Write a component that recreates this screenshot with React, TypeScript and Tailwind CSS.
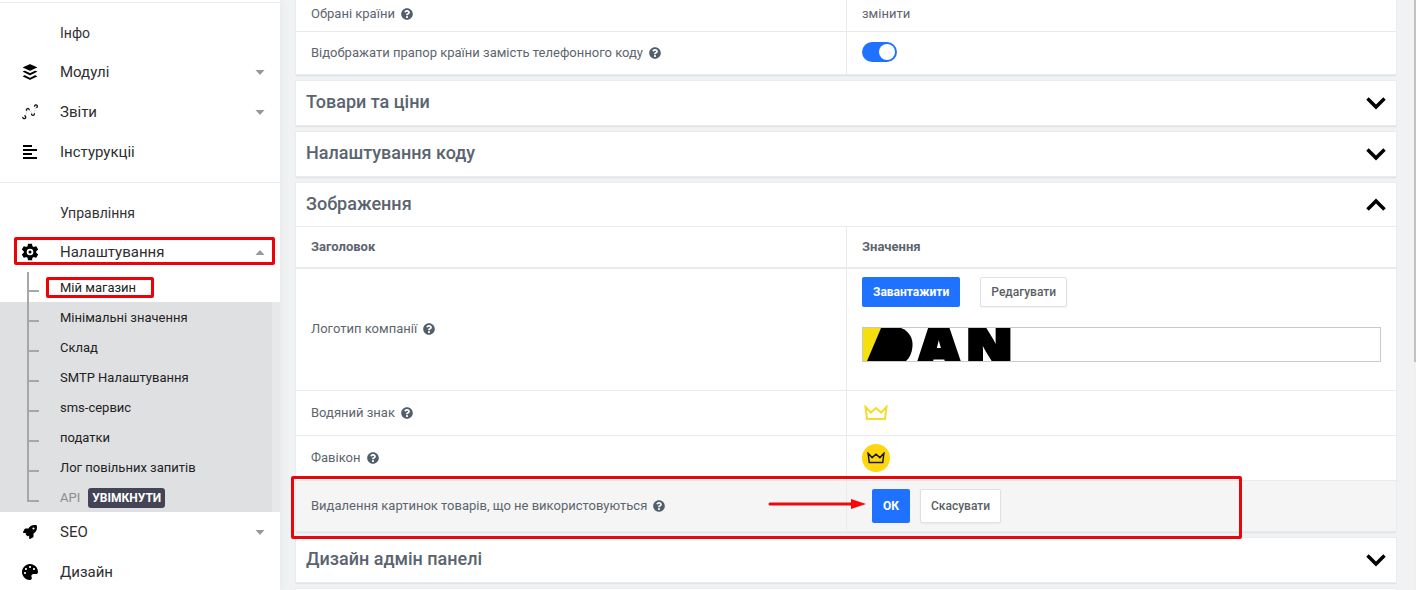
import React, { useState } from 'react'
import { FaBuffer, FaPalette, FaQuestionCircle, FaRocket } from 'react-icons/fa'
import clsx from 'clsx'

const GraphIcon = () => (
  <svg viewBox="0 0 16 16" className="h-4 w-4" fill="none" stroke="#111">
    <path d="M3 12.5L5.500 6M6.800 6L10.500 9.500M11.800 9.500L14 3" stroke="#ddd" />
    <path d="M.8 12.8a1.5 1.5 0 1 0 1.6-1.1M4.6 6.6a1.4 1.4 0 1 1 2.6-.5M9.6 9.6a1.4 1.4 0 1 0 2.6-.2M12.6 2.8a1.4 1.4 0 1 1 1.6.9" strokeWidth="1.3" />
  </svg>
)

const LinesIcon = () => (
  <svg viewBox="0 0 16 16" className="h-4 w-4">
    <path d="M1 1h9v2H1zM1 5h14v2H1zM1 9h9v2H1zM1 13h14v2H1z" />
  </svg>
)

const GearIcon = () => (
  <svg viewBox="0 0 24 24" className="h-5 w-5">
    <path d="M19.43 12.98c.04-.32.07-.64.07-.98s-.03-.66-.07-.98l2.11-1.65a.5.5 0 0 0 .12-.64l-2-3.46a.5.5 0 0 0-.61-.22l-2.49 1a7.3 7.3 0 0 0-1.69-.98l-.38-2.65A.49.49 0 0 0 14 2h-4a.49.49 0 0 0-.49.42l-.38 2.65c-.61.25-1.17.59-1.69.98l-2.49-1a.5.5 0 0 0-.61.22l-2 3.46a.5.5 0 0 0 .12.64l2.11 1.65c-.04.32-.07.65-.07.98s.03.66.07.98l-2.11 1.65a.5.5 0 0 0-.12.64l2 3.46c.12.22.39.3.61.22l2.49-1c.52.4 1.08.73 1.69.98l.38 2.65c.03.24.24.42.49.42h4c.25 0 .46-.18.49-.42l.38-2.65c.61-.25 1.17-.59 1.69-.98l2.49 1c.23.09.49 0 .61-.22l2-3.46a.5.5 0 0 0-.12-.64z" />
    <circle cx="12" cy="12" r="4" fill="#fff" />
    <circle cx="12" cy="12" r="1.8" />
  </svg>
)

const Caret = ({ up = false }: { up?: boolean }) => (
  <svg viewBox="0 0 10 5" className={clsx('h-[5px] w-2.5', up && 'rotate-180')} fill="#999">
    <path d="M.5 0h9L5 5z" />
  </svg>
)

const Chevron = ({ up = false }: { up?: boolean }) => (
  <svg
    viewBox="0 0 20 14"
    className={clsx('h-3.5 w-5', up && 'rotate-180')}
    fill="none"
    stroke="#000"
    strokeWidth="3.5"
  >
    <path d="M1.500 2.500L10 11l8.500-8.500" />
  </svg>
)

const Crown = ({ className }: { className: string }) => (
  <svg viewBox="0 0 24 16" className={className} fill="none" stroke="currentColor" strokeWidth="2">
    <path d="M1.5 1.8L3 14h18l1.5-12.2-5.3 5.7L12 3 6.8 7.5z" />
  </svg>
)

const CompanyLogo = () => (
  <svg viewBox="0 0 150 33" className="h-[33px] w-[150px]" role="img" aria-label="DAN">
    <path d="M0 0h18L4 33H0z" fill="#f5df0d" />
    <path d="M18 0h20c8 3 12 10 11.500 18-.5 7-3 12-6.500 15H4z" />
    <g className="font-['Inter','Roboto',sans-serif] font-black">
      <text x="17" y="28" fontSize="32">
        D
      </text>
      <g fontSize="58" stroke="#000" strokeWidth="3">
        <text x="53" y="38">
          A
        </text>
        <text x="104" y="38">
          N
        </text>
      </g>
    </g>
  </svg>
)

type NavItemProps = {
  label: string
  icon: React.ReactNode
  arrow?: 'up' | 'down'
  marked?: boolean
}

const NavItem = ({ label, icon, arrow, marked }: NavItemProps) => (
  <li className="relative">
    <a href="#" className="flex h-10 items-center pr-[15px] text-[15px] text-[#2e2e2e]">
      <span className="flex w-[60px] justify-center text-base text-black">{icon}</span>
      <span className="flex-1">{label}</span>
      {arrow && <Caret up={arrow === 'up'} />}
    </a>
    {marked && (
      <span className="pointer-events-none absolute top-[5px] right-[5px] left-3.5 h-7 rounded-xs border-3 border-[#ee0207]" />
    )}
  </li>
)

const NavTitle = ({ children }: { children: React.ReactNode }) => (
  <h2 className="flex h-10 items-center pt-0.5 pl-[60px] text-sm text-[#333]">{children}</h2>
)

const subItems = [
  'Мій магазин',
  'Мінімальні значення',
  'Склад',
  'SMTP Налаштування',
  'sms-сервис',
  'податки',
  'Лог повільних запитів',
  'API',
]

const SubMenu = () => (
  <ul className="text-[13px] text-[#222]">
    {subItems.map((item, i) => {
      const last = i === subItems.length - 1
      return (
        <li
          key={item}
          className={clsx(
            'relative flex h-[30px] items-center pl-[27px]',
            i === 0 ? 'bg-white' : 'border-r-8 border-[#e7e8ea] bg-[#dfe0e2]'
          )}
        >
          <span className="mr-[21px] flex w-3 flex-col self-stretch">
            <span className="h-5 border-b-2 border-l-2 border-[#a6a7a9]" />
            {!last && <span className="flex-1 border-l-2 border-[#a6a7a9]" />}
          </span>
          <a href="#" className={clsx('pt-0.5', last && 'text-[#8b8c8e]')}>
            {item}
          </a>
          {last && (
            <button
              type="button"
              className="mt-0.5 ml-2 h-5 rounded-[3px] bg-[#434556] px-1 text-xs font-bold text-white"
            >
              УВІМКНУТИ
            </button>
          )}
          {i === 0 && (
            <span className="pointer-events-none absolute top-[5px] left-[46px] h-[21px] w-[108px] rounded-xs border-3 border-[#ee0207]" />
          )}
        </li>
      )
    })}
  </ul>
)

const Sidebar = () => (
  <aside className="z-10 w-[280px] shrink-0 bg-white pt-0.5 shadow-[0_0_10px_rgba(0,0,0,0.06)]">
    <nav>
      <div className="border-t border-[#e9eaeb] pt-[9px] pb-2.5">
        <NavTitle>Інфо</NavTitle>
        <ul>
          <NavItem label="Модулі" icon={<FaBuffer className="h-[18px] w-[18px]" />} arrow="down" />
          <NavItem label="Звіти" icon={<GraphIcon />} arrow="down" />
          <NavItem label="Інстурукціі" icon={<LinesIcon />} />
        </ul>
      </div>
      <div className="border-t border-[#e9eaeb] pt-[9px]">
        <NavTitle>Управління</NavTitle>
        <ul>
          <NavItem label="Налаштування" icon={<GearIcon />} arrow="up" marked />
          <li>
            <SubMenu />
          </li>
          <NavItem label="SEO" icon={<FaRocket className="h-3.5 w-3.5" />} arrow="down" />
          <NavItem label="Дизайн" icon={<FaPalette />} />
        </ul>
      </div>
    </nav>
  </aside>
)

const Hint = ({ id, children }: { id?: string; children: string }) => (
  <span className="flex items-center gap-1.5">
    {id ? <label htmlFor={id}>{children}</label> : children}
    <FaQuestionCircle className="h-3 w-3 text-[#525f6b]" />
  </span>
)

const Card = ({ children }: { children?: React.ReactNode }) => (
  <section className="bg-white shadow-[0_0_0_1px_#e9ebed,0_2px_1px_#e1e4e6]">{children}</section>
)

const CardHeader = ({ title, open = false }: { title: string; open?: boolean }) => (
  <h2 className="text-lg font-medium text-[#5a646e]">
    <button
      type="button"
      aria-expanded={open}
      className={clsx(
        'flex w-full items-center justify-between px-2.5 text-left',
        open ? 'h-[43px]' : 'h-11'
      )}
    >
      <span className="pb-0.5">{title}</span>
      <Chevron up={open} />
    </button>
  </h2>
)

const labelCell = 'border-t border-[#e8eaec] px-[15px]'
const valueCell = 'border-t border-l border-[#e8eaec] px-[15px]'
const primaryBtn = 'rounded-xs bg-[#1f72ff] px-[11px] font-bold text-white'
const plainBtn =
  'rounded-xs border border-[#dde1e4] bg-white px-2.5 font-medium text-[#5a5f66] shadow-xs'

const App = () => {
  const [flag, setFlag] = useState(true)

  return (
    <div className="flex h-screen overflow-hidden bg-[#f0f2f4] font-['Roboto','Liberation_Sans',sans-serif] text-[13px] text-[#5c656e]">
      <Sidebar />
      <main className="flex min-w-0 flex-1 flex-col gap-[7px] pr-[18px] pl-4">
        <Card>
          <table className="w-full table-fixed border-separate border-spacing-0">
            <tbody>
              <tr className="h-[31px]">
                <td className="px-[15px] pb-1">
                  <Hint>Обрані країни</Hint>
                </td>
                <td className="border-l border-[#e8eaec] px-[15px] pb-1">
                  <a href="#">змінити</a>
                </td>
              </tr>
              <tr className="h-[43px]">
                <td className={labelCell}>
                  <Hint id="flag">Відображати прапор країни замість телефонного коду</Hint>
                </td>
                <td className={clsx(valueCell, 'pb-0.5')}>
                  <input
                    id="flag"
                    type="checkbox"
                    role="switch"
                    checked={flag}
                    onChange={(e) => setFlag(e.target.checked)}
                    className="flex h-5 w-[35px] appearance-none items-center rounded-full bg-[#b5bac0] px-0.5 before:h-4 before:w-4 before:rounded-full before:bg-white checked:justify-end checked:bg-[#1f72ff]"
                  />
                </td>
              </tr>
            </tbody>
          </table>
        </Card>

        <Card>
          <CardHeader title="Товари та ціни" />
        </Card>
        <Card>
          <CardHeader title="Налаштування коду" />
        </Card>

        <Card>
          <CardHeader title="Зображення" open />
          <table className="w-full table-fixed border-separate border-spacing-0">
            <thead>
              <tr className="h-[41px] text-left">
                <th className={clsx(labelCell, 'font-bold')}>Заголовок</th>
                <th className={clsx(valueCell, 'font-bold')}>Значення</th>
              </tr>
            </thead>
            <tbody>
              <tr className="h-[123px]">
                <td className={clsx(labelCell, 'border-t-2 pb-0.5')}>
                  <Hint>Логотип компанії</Hint>
                </td>
                <td className={clsx(valueCell, 'border-t-2 pt-2 pb-7')}>
                  <div className="flex gap-5 text-xs">
                    <button type="button" className={clsx(primaryBtn, 'h-[30px]')}>
                      Завантажити
                    </button>
                    <button type="button" className={clsx(plainBtn, 'h-[30px]')}>
                      Редагувати
                    </button>
                  </div>
                  <div className="mt-5 border border-[#c8c9ca]">
                    <CompanyLogo />
                  </div>
                </td>
              </tr>
              <tr className="h-[45px]">
                <td className={labelCell}>
                  <Hint>Водяний знак</Hint>
                </td>
                <td className={valueCell}>
                  <span className="flex w-7 justify-center text-[#f3dc2c]">
                    <Crown className="h-4 w-6" />
                  </span>
                </td>
              </tr>
              <tr className="h-[45px]">
                <td className={labelCell}>
                  <Hint>Фавікон</Hint>
                </td>
                <td className={valueCell}>
                  <span className="flex h-7 w-7 items-center justify-center rounded-full bg-[#ffd60f] text-[#1c1a10]">
                    <Crown className="h-3 w-[18px]" />
                  </span>
                </td>
              </tr>
              <tr className="relative h-[51px] bg-[#f5f5f5]">
                <td className={labelCell}>
                  <Hint>Видалення картинок товарів, що не використовуються</Hint>
                  <span className="pointer-events-none absolute -top-1 -left-[5px] z-10 h-[63px] w-[951px] rounded-xs border-3 border-[#e8060b]" />
                </td>
                <td className={clsx(valueCell, 'relative')}>
                  <div className="flex gap-2.5 pl-2.5 text-xs">
                    <button type="button" className={clsx(primaryBtn, 'h-[34px]')}>
                      ОК
                    </button>
                    <button type="button" className={clsx(plainBtn, 'h-[34px]')}>
                      Скасувати
                    </button>
                  </div>
                  <svg viewBox="0 0 98 10" className="absolute top-[18px] -left-[79px] h-2.5 w-[98px]">
                    <path d="M2 5h84" stroke="#ea0a0c" strokeWidth="3" strokeLinecap="round" />
                    <path d="M83 0l15 5-15 5z" fill="#fb0507" />
                  </svg>
                </td>
              </tr>
            </tbody>
          </table>
        </Card>

        <Card>
          <CardHeader title="Дизайн адмін панелі" />
        </Card>
        <Card>
          <div className="h-11" />
        </Card>
      </main>
      <div className="w-0.5 shrink-0 bg-[#f0f0f0]">
        <div className="h-[362px] bg-[#c1c1c1]" />
      </div>
    </div>
  )
}

export default App
